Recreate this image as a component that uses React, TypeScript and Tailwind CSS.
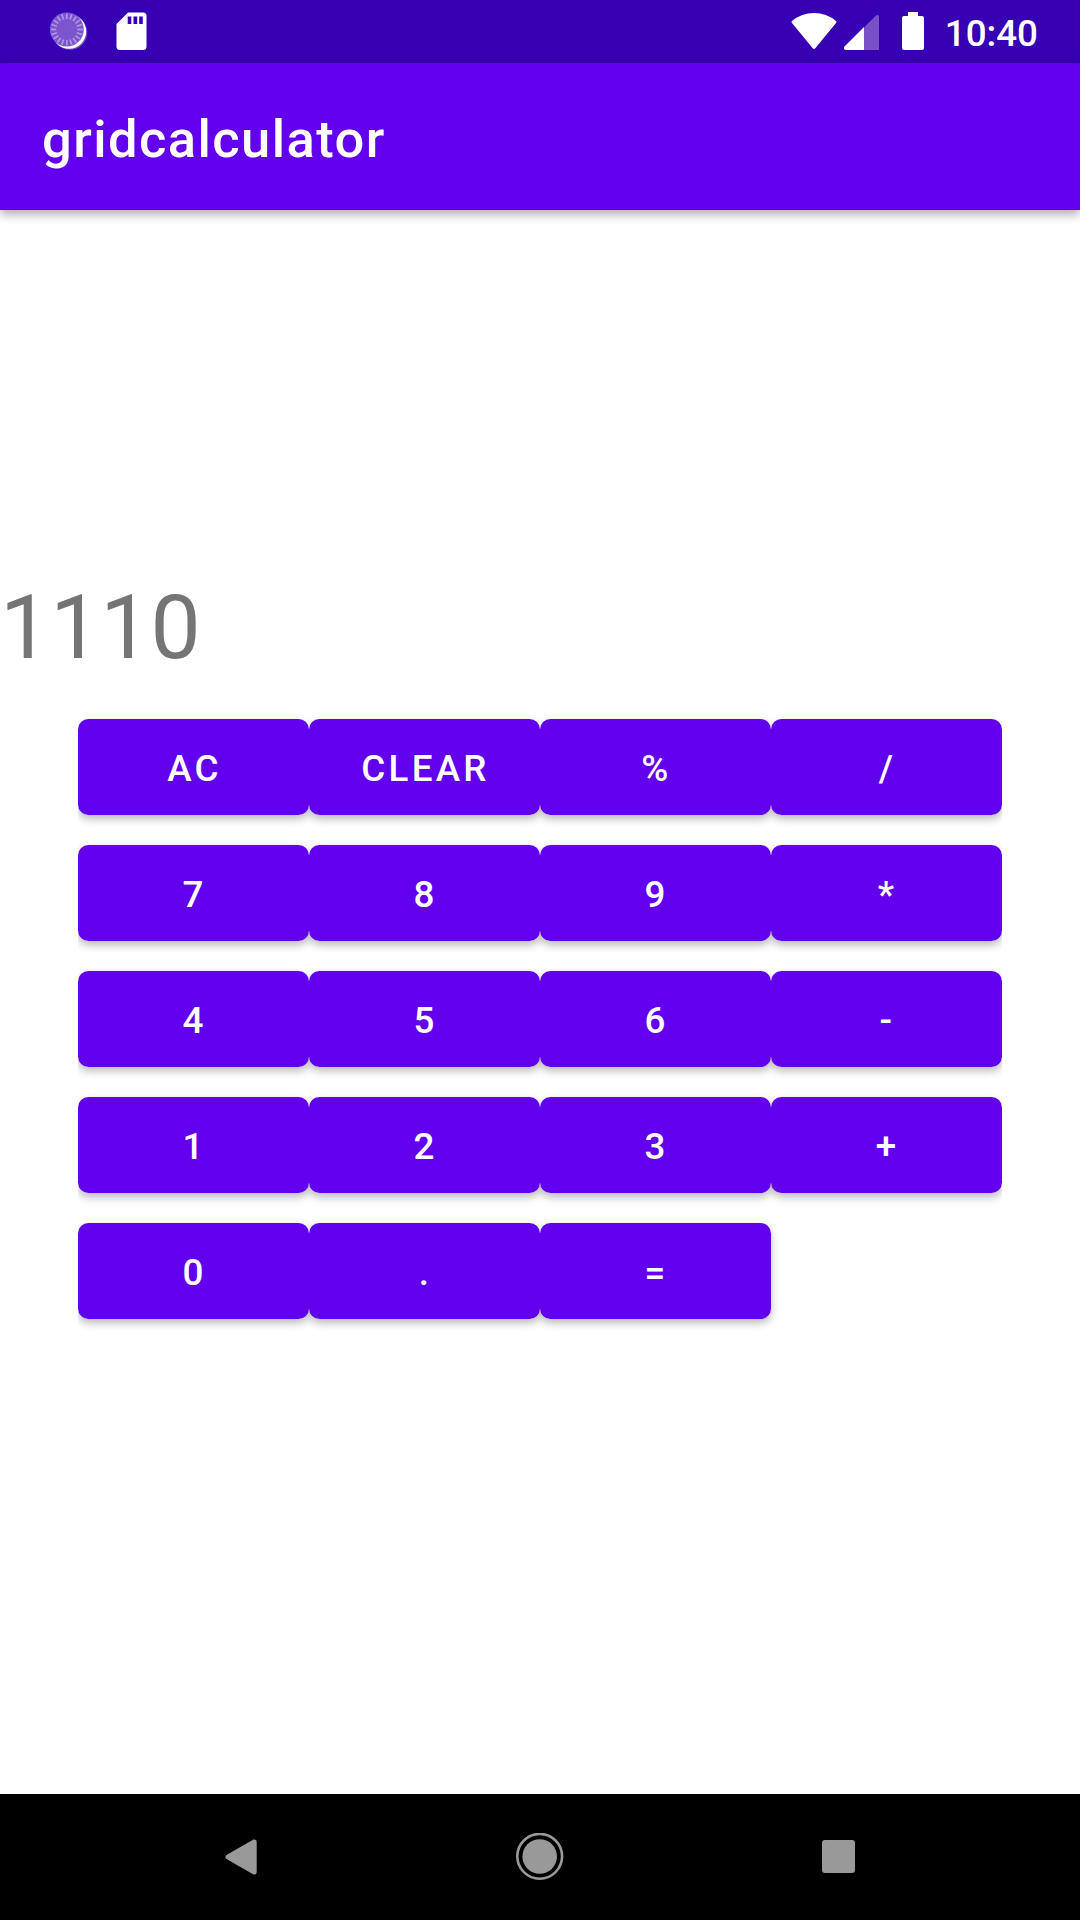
const keys = [
  'AC', 'CLEAR', '%', '/',
  '7', '8', '9', '*',
  '4', '5', '6', '-',
  '1', '2', '3', '+',
  '0', '.', '=',
];

const ticks = Array.from({ length: 20 }, (_, i) => i * 18);

function SyncIcon() {
  return (
    <svg className="h-10 w-10" viewBox="0 0 40 40">
      <circle cx="20" cy="20.500" r="17.3" fill="#fff" opacity=".3" />
      <circle cx="19" cy="19.500" r="17.200" fill="#fff" />
      <circle cx="16.800" cy="17.500" r="17" fill="#7c54cd" />
      <g stroke="#af98df" strokeWidth="1.7">
        {ticks.map((a) => (
          <line key={a} x1="16.800" y1="1.500" x2="16.800" y2="7" transform={`rotate(${a} 16.8 17.5)`} />
        ))}
      </g>
    </svg>
  );
}

function StatusBar() {
  return (
    <div className="flex h-[63px] bg-[#3700b3] text-white">
      <div className="flex flex-1 pt-3 pl-[50px]">
        <SyncIcon />
        <svg className="ml-[26px] h-[39px] w-[31px]" viewBox="0 0 31 39">
          <path
            fillRule="evenodd"
            fill="currentColor"
            d="M12 .5H27Q30.5.5 30.5 4V34.500Q30.5 38 27 38H4Q.5 38 .5 34.500V12ZM11.7 4.5V12H15.3V4.5ZM17.5 4.5V12H21.2V4.5ZM23.2 4.5V12H26.8V4.5Z"
          />
        </svg>
      </div>
      <div className="flex pt-3 pr-[42px]">
        <svg className="h-[38px] w-[46px]" viewBox="0 0 46 38">
          <path fill="currentColor" d="M1 9Q10.5 1 23 1T45 9Q46 10 45 11L24.5 36Q23 38 21.5 36L1 11Q0 10 1 9Z" />
        </svg>
        <svg className="ml-[7px] h-[38px] w-[36px]" viewBox="0 0 36 38">
          <path fill="#7950c8" d="M20 15.5L32 3.5Q33 3 34 3Q35 3.300 35 4.500V37Q35 38 34 38H20Z" />
          <path fill="currentColor" d="M20 15V38H1.500Q-.5 37.500 0 35Z" />
        </svg>
        <svg className="ml-[22px] h-[38px] w-[22px]" viewBox="0 0 22 38">
          <path fill="currentColor" d="M6 0H16V4H20Q22 4 22 6V36Q22 38 20 38H2Q0 38 0 36V6Q0 4 2 4H6Z" />
        </svg>
        <span className="ml-[20.5px] pt-px text-[36.75px] leading-[42px] font-medium">10:40</span>
      </div>
    </div>
  );
}

function NavigationBar() {
  return (
    <div className="flex h-[126px] items-center justify-between bg-black pr-[225px] pl-[225px] text-[#999]">
      <svg className="h-9 w-8" viewBox="0 0 32 36">
        <path fill="currentColor" d="M1.500 16L28.500.6Q31.700-.2 31.700 3V33Q31.700 36.200 28.500 35.400L1.500 20Q-.7 18 1.500 16Z" />
      </svg>
      <svg className="h-12 w-12" viewBox="0 0 48 48">
        <circle cx="23.700" cy="23.300" r="22.400" fill="none" stroke="currentColor" strokeWidth="2.600" />
        <circle cx="23.700" cy="23.500" r="17.300" fill="currentColor" />
      </svg>
      <div className="mb-px h-[33px] w-[33px] rounded-[3px] bg-[#999]" />
    </div>
  );
}

export default function App() {
  return (
    <div className="flex h-[1920px] w-[1080px] flex-col overflow-hidden bg-white font-['Roboto',sans-serif]">
      <StatusBar />
      <header className="flex h-[147px] items-center bg-[#6200ee] pt-[5px] pl-[42px] shadow-[0_4px_10px_rgba(0,0,0,0.35)]">
        <h1 className="text-[52.5px] leading-[62px] font-medium tracking-[0.027em] text-white">gridcalculator</h1>
      </header>
      <main className="flex-1 pt-[365px]">
        <div className="h-32 text-[89.25px] leading-[105px] text-[#757575]">1110</div>
        <div className="isolate mx-[78px] grid h-[630px] grid-cols-4 content-start gap-y-[30px] overflow-x-clip pt-4">
          {keys.map((key) => (
            <button
              key={key}
              className="relative h-24 rounded-[10.5px] bg-[#6200ee] pt-[3px] pl-0.5 text-[36.75px] font-medium tracking-[0.0893em] text-white before:absolute before:inset-0 before:-z-10 before:rounded-[10.5px] before:shadow-[0_4px_8px_rgba(0,0,0,0.28)]"
            >
              {key}
            </button>
          ))}
        </div>
      </main>
      <NavigationBar />
    </div>
  );
}
